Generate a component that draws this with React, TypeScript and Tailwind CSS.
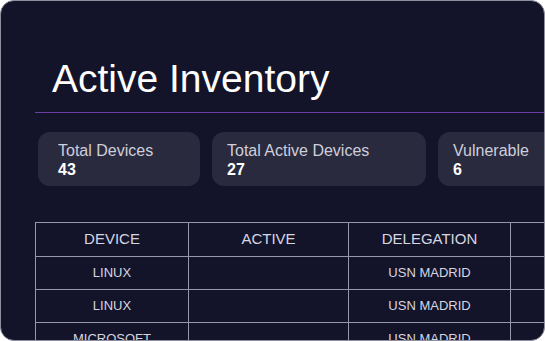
import React from "react";

const stats = [
  { label: "Total Devices", value: "43", width: "w-[162px]", pad: "pl-[20px]" },
  { label: "Total Active Devices", value: "27", width: "w-[214px]", pad: "pl-[15px]" },
  { label: "Vulnerable", value: "6", width: "w-[130px]", pad: "pl-[15px]" },
];

const rows = [
  { device: "LINUX", active: "", delegation: "USN MADRID" },
  { device: "LINUX", active: "", delegation: "USN MADRID" },
  { device: "MICROSOFT", active: "", delegation: "USN MADRID" },
];

const App = () => {
  return (
    <div className="w-[545px] h-[341px] bg-white overflow-hidden">
      <div
        className="w-full h-full rounded-[14px] border border-[#8e8e9e] bg-[#131429] overflow-hidden pl-[34px]"
        style={{ fontFamily: '"Liberation Sans", Arial, sans-serif' }}
      >
        <h1 className="pt-[55px] pl-[17px] text-[39px] leading-[46px] text-white">
          Active Inventory
        </h1>
        <div className="mt-[10px] h-px bg-[#6a3ea6]" />

        <div className="mt-[19px] flex gap-[12px] pl-[3px]">
          {stats.map((s) => (
            <div
              key={s.label}
              className={`${s.width} ${s.pad} shrink-0 h-[54px] rounded-[12px] bg-[#2a2a3f] pt-[9px]`}
            >
              <div className="text-[16px] leading-[19px] text-[#cfcfdb]">{s.label}</div>
              <div className="text-[16px] leading-[20px] font-bold text-white">{s.value}</div>
            </div>
          ))}
        </div>

        <table className="mt-[36px] border-collapse text-[#d6d6e2] w-[560px] table-fixed">
          <colgroup>
            <col className="w-[153px]" />
            <col className="w-[160px]" />
            <col className="w-[162px]" />
            <col className="w-[85px]" />
          </colgroup>
          <thead>
            <tr className="h-[34px]">
              {["DEVICE", "ACTIVE", "DELEGATION", ""].map((h, i) => (
                <th
                  key={i}
                  className="border border-[#9797aa] text-[15px] font-normal text-center"
                >
                  {h}
                </th>
              ))}
            </tr>
          </thead>
          <tbody>
            {rows.map((r, i) => (
              <tr key={i} className="h-[33px]">
                <td className="border border-[#9797aa] text-[13px] text-center">{r.device}</td>
                <td className="border border-[#9797aa] text-[13px] text-center">{r.active}</td>
                <td className="border border-[#9797aa] text-[13px] text-center">{r.delegation}</td>
                <td className="border border-[#9797aa]" />
              </tr>
            ))}
          </tbody>
        </table>
      </div>
    </div>
  );
};

export default App;
